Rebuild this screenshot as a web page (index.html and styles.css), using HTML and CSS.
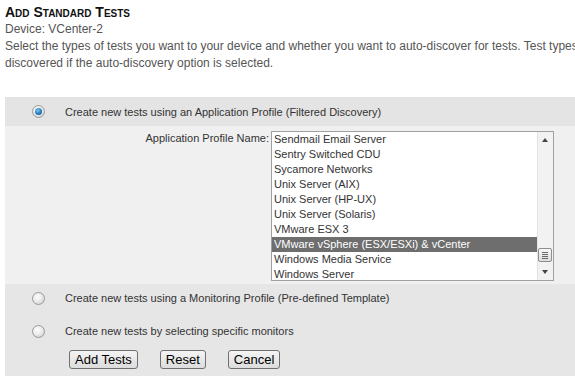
FILE: index.html
```html
<!DOCTYPE html>
<html lang="en">
<head>
    <meta charset="UTF-8">
    <title>Add Standard Tests</title>
    <link rel="stylesheet" href="styles.css">
</head>
<body>
<div class="intro">
    <h1>Add Standard Tests</h1>
    <p>Device: VCenter-2</p>
    <p class="nowrap">Select the types of tests you want to your device and whether you want to auto-discover for tests. Test types<br>discovered if the auto-discovery option is selected.</p>
</div>

<div class="panel">
    <div class="row head">
        <span class="radio checked"></span>
        <span>Create new tests using an Application Profile (Filtered Discovery)</span>
    </div>

    <div class="profile">
        <label>Application Profile Name:</label>
        <div class="listbox">
            <ul class="items">
                <li>Sendmail Email Server</li>
                <li>Sentry Switched CDU</li>
                <li>Sycamore Networks</li>
                <li>Unix Server (AIX)</li>
                <li>Unix Server (HP-UX)</li>
                <li>Unix Server (Solaris)</li>
                <li>VMware ESX 3</li>
                <li class="selected">VMware vSphere (ESX/ESXi) &amp; vCenter</li>
                <li>Windows Media Service</li>
                <li>Windows Server</li>
            </ul>
            <div class="scrollbar">
                <span class="arrow up"></span>
                <span class="track"></span>
                <span class="thumb"><i></i><i></i><i></i><i></i></span>
                <span class="arrow down"></span>
            </div>
        </div>
    </div>

    <div class="bottom">
        <div class="row">
            <span class="radio"></span>
            <span>Create new tests using a Monitoring Profile (Pre-defined Template)</span>
        </div>
        <div class="row">
            <span class="radio"></span>
            <span>Create new tests by selecting specific monitors</span>
        </div>
        <div class="buttons">
            <button>Add Tests</button>
            <button>Reset</button>
            <button>Cancel</button>
        </div>
    </div>
</div>
</body>
</html>
```

FILE: styles.css
```css
* {
    box-sizing: border-box;
    margin: 0;
    padding: 0;
}

html, body {
    overflow: hidden;
}

body {
    font-family: "Liberation Sans", Arial, sans-serif;
    font-size: 12px;
    color: #555;
    background: #fff;
    width: 575px;
    height: 376px;
    display: flex;
    flex-direction: column;
}

.intro {
    padding: 4px 0 0 5px;
}

.intro h1 {
    font-size: 14px;
    font-weight: bold;
    font-variant: small-caps;
    color: #111;
    line-height: 17px;
}

.intro p {
    line-height: 17px;
}

.nowrap {
    white-space: nowrap;
}

.panel {
    margin: 25px 0 0 5px;
    flex: 1;
    display: flex;
    flex-direction: column;
}

.row {
    display: flex;
    align-items: center;
    gap: 20px;
    padding-left: 27px;
    color: #333;
    font-size: 11px;
}

.head {
    background: #e4e4e4;
    height: 29px;
}

.radio {
    display: inline-block;
    width: 13px;
    height: 13px;
    border-radius: 50%;
    border: 1px solid #9a9a9a;
    background: radial-gradient(circle at 40% 35%, #fff 0, #e6e6e6 55%, #c4c4c4 100%);
    position: relative;
}

.radio.checked::after {
    content: "";
    position: absolute;
    left: 2px;
    top: 2px;
    width: 7px;
    height: 7px;
    border-radius: 50%;
    background: radial-gradient(circle at 40% 35%, #7fc4f0 0, #1c76b8 60%, #0d4f80 100%);
}

.profile {
    background: #f0f0f0;
    display: flex;
    align-items: flex-start;
    padding: 5px 0 3px 0;
}

.profile label {
    width: 266px;
    text-align: right;
    padding-right: 2px;
    color: #333;
    font-size: 11px;
    line-height: 15px;
}

.listbox {
    display: flex;
    width: 283px;
    height: 150px;
    border: 1px solid #a0a0a0;
    background: #fff;
}

.items {
    list-style: none;
    flex: 1;
}

.items li {
    height: 15px;
    line-height: 15px;
    padding-left: 2px;
    color: #333;
    font-size: 11px;
    white-space: nowrap;
}

.items li.selected {
    background: #6e6e6e;
    color: #fff;
}

.scrollbar {
    width: 16px;
    display: flex;
    flex-direction: column;
    background: #f2f2f2;
    border-left: 1px solid #e2e2e2;
}

.arrow {
    height: 16px;
    position: relative;
}

.arrow::after {
    content: "";
    position: absolute;
    left: 4px;
    border-left: 3.5px solid transparent;
    border-right: 3.5px solid transparent;
}

.arrow.up::after {
    top: 6px;
    border-bottom: 4px solid #444;
}

.arrow.down::after {
    top: 6px;
    border-top: 4px solid #444;
}

.track {
    flex: 1;
}

.thumb {
    height: 14px;
    margin: 0 1px 2px 0;
    border: 1px solid #8f8f8f;
    border-radius: 2px;
    background: linear-gradient(#f8f8f8, #dcdcdc);
    display: flex;
    flex-direction: column;
    justify-content: center;
    gap: 1px;
    padding: 0 3px;
}

.thumb i {
    display: block;
    height: 1px;
    background: #6a6a6a;
}

.bottom {
    flex: 1;
    background: #e6e6e6;
    display: flex;
    flex-direction: column;
    gap: 5px;
}

.bottom .row {
    height: 28px;
}

.buttons {
    display: flex;
    gap: 22px;
    padding-left: 64px;
}

.buttons button {
    font-family: "Liberation Sans", Arial, sans-serif;
    font-size: 13px;
    color: #000;
    height: 19px;
    padding: 0 5px;
    border: 1px solid #707070;
    border-radius: 3px;
    background: linear-gradient(#f4f4f4, #dcdcdc);
}
```
